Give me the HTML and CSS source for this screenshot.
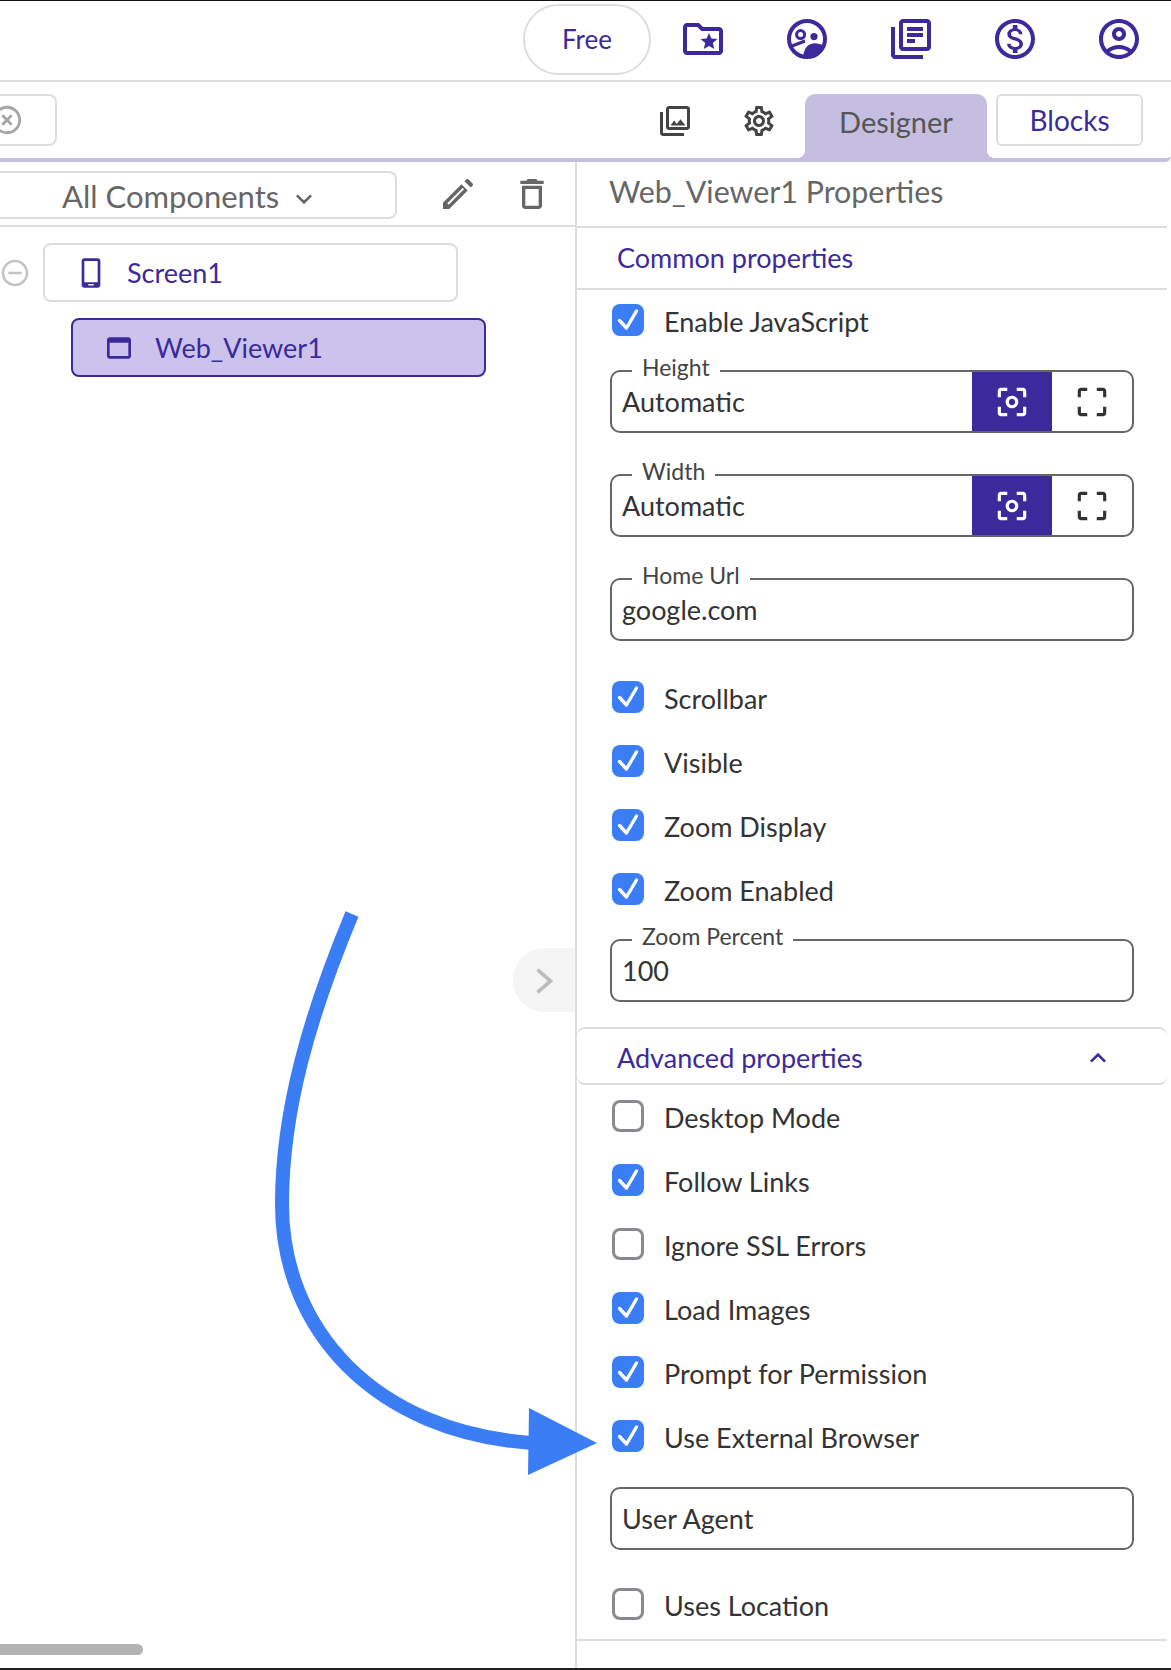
FILE: index.html
```html
<!DOCTYPE html>
<html lang="en">
<head>
  <meta charset="UTF-8">
  <title>Designer</title>
  <link rel="stylesheet" href="styles.css">
</head>
<body>

  <!-- icons used more than once -->
  <svg class="sprite">
    <symbol id="tick" viewBox="0 0 32 32"><path d="M7.5 16.5l7 7.5L24.5 7" fill="none" stroke="#fff" stroke-width="3.4" stroke-linecap="round" stroke-linejoin="round"/></symbol>
    <symbol id="focus" viewBox="0 0 24 24"><path d="M5 15H3v4c0 1.1.9 2 2 2h4v-2H5v-4zM5 5h4V3H5c-1.1 0-2 .9-2 2v4h2V5zm14-2h-4v2h4v4h2V5c0-1.1-.9-2-2-2zm0 16h-4v2h4c1.1 0 2-.9 2-2v-4h-2v4zM12 8c-2.21 0-4 1.79-4 4s1.79 4 4 4 4-1.79 4-4-1.79-4-4-4zm0 6c-1.1 0-2-.9-2-2s.9-2 2-2 2 .9 2 2-.9 2-2 2z"/></symbol>
    <symbol id="free" viewBox="0 0 24 24"><path d="M3 5v4h2V5h4V3H5c-1.1 0-2 .9-2 2zm2 10H3v4c0 1.1.9 2 2 2h4v-2H5v-4zm14 4h-4v2h4c1.1 0 2-.9 2-2v-4h-2v4zm0-16h-4v2h4v4h2V5c0-1.1-.9-2-2-2z"/></symbol>
  </svg>

  <!-- Top bar -->
  <header class="topbar">
    <a class="plan-pill">Free</a>
    <svg class="top-icon" viewBox="0 0 24 24"><path d="M20 6h-8l-2-2H4c-1.11 0-1.99.89-1.99 2L2 18c0 1.11.89 2 2 2h16c1.11 0 2-.89 2-2V8c0-1.11-.89-2-2-2zm0 12H4V6h5.17l2 2H20v10zm-6.92-3.96L12.39 17 15 15.47 17.61 17l-.69-2.96 2.3-1.99-3.03-.26L15 9l-1.19 2.79-3.03.26z"/></svg>
    <svg class="top-icon" viewBox="0 0 24 24">
      <circle cx="12" cy="12" r="9" fill="none" stroke="#3c2a9c" stroke-width="2"/>
      <circle cx="8.8" cy="9.8" r="2" fill="none" stroke="#3c2a9c" stroke-width="1.5"/>
      <circle cx="15.5" cy="10.8" r="1.8"/>
      <path d="M4.5 15.5L11 13" fill="none" stroke="#3c2a9c" stroke-width="1.6"/>
      <path d="M10 21C10.5 17 12 14.5 15 14.2C17 14 19 14.6 20.5 15.5C19 19 15 22 10 21z"/>
    </svg>
    <svg class="top-icon" viewBox="0 0 24 24"><path d="M4 6H2v14c0 1.1.9 2 2 2h14v-2H4V6zm16-4H8c-1.1 0-2 .9-2 2v12c0 1.1.9 2 2 2h12c1.1 0 2-.9 2-2V4c0-1.1-.9-2-2-2zm0 14H8V4h12v12zM10 9h8v2h-8zm0 3h4v2h-4zm0-6h8v2h-8z"/></svg>
    <svg class="top-icon" viewBox="0 0 24 24"><path d="M12 2C6.48 2 2 6.48 2 12s4.48 10 10 10 10-4.48 10-10S17.52 2 12 2zm0 18c-4.41 0-8-3.59-8-8s3.59-8 8-8 8 3.59 8 8-3.59 8-8 8zm.31-8.86c-1.77-.45-2.34-.94-2.34-1.67 0-.84.79-1.43 2.1-1.43 1.38 0 1.9.66 1.94 1.64h1.71c-.05-1.34-.87-2.57-2.49-2.97V5H10.9v1.69c-1.51.32-2.72 1.3-2.72 2.81 0 1.79 1.49 2.69 3.66 3.21 1.95.46 2.34 1.15 2.34 1.87 0 .53-.39 1.39-2.1 1.39-1.6 0-2.23-.72-2.32-1.64H8.04c.1 1.7 1.36 2.66 2.86 2.97V19h2.34v-1.67c1.52-.29 2.72-1.16 2.73-2.77-.01-2.2-1.9-2.96-3.66-3.42z"/></svg>
    <svg class="top-icon" viewBox="0 0 24 24"><path d="M12 2C6.48 2 2 6.48 2 12s4.48 10 10 10 10-4.48 10-10S17.52 2 12 2zM7.35 18.5C8.66 17.56 10.26 17 12 17s3.34.56 4.65 1.5c-1.31.94-2.91 1.5-4.65 1.5s-3.34-.56-4.65-1.5zm10.79-1.38C16.45 15.8 14.32 15 12 15s-4.45.8-6.14 2.12C4.7 15.73 4 13.95 4 12c0-4.42 3.58-8 8-8s8 3.58 8 8c0 1.95-.7 3.73-1.86 5.12z"/><path d="M12 6c-1.93 0-3.5 1.57-3.5 3.5S10.07 13 12 13s3.5-1.57 3.5-3.5S13.93 6 12 6zm0 5c-.83 0-1.5-.67-1.5-1.5S11.17 8 12 8s1.5.67 1.5 1.5S12.83 11 12 11z"/></svg>
  </header>

  <!-- Toolbar with tabs -->
  <div class="toolbar">
    <div class="search-box">
      <svg class="clear-icon" viewBox="0 0 24 24"><path d="M14.59 8L12 10.59 9.41 8 8 9.41 10.59 12 8 14.59 9.41 16 12 13.41 14.59 16 16 14.59 13.41 12 16 9.41 14.59 8zM12 2C6.47 2 2 6.47 2 12s4.47 10 10 10 10-4.47 10-10S17.53 2 12 2zm0 18c-4.41 0-8-3.59-8-8s3.59-8 8-8 8 3.59 8 8-3.59 8-8 8z"/></svg>
    </div>
    <svg class="tool-icon tool-media" viewBox="0 0 24 24"><path d="M20 4v12H8V4h12m0-2H8c-1.1 0-2 .9-2 2v12c0 1.1.9 2 2 2h12c1.1 0 2-.9 2-2V4c0-1.1-.9-2-2-2zm-8.5 9.67l1.69 2.26 2.48-3.1L19 15H9zM2 6v14c0 1.1.9 2 2 2h14v-2H4V6H2z"/></svg>
    <svg class="tool-icon tool-gear" viewBox="0 0 24 24"><path d="M19.43 12.98c.04-.32.07-.64.07-.98 0-.34-.03-.66-.07-.98l2.11-1.65c.19-.15.24-.42.12-.64l-2-3.46c-.09-.16-.26-.25-.44-.25-.06 0-.12.01-.17.03l-2.49 1c-.52-.4-1.08-.73-1.69-.98l-.38-2.65C14.46 2.18 14.25 2 14 2h-4c-.25 0-.46.18-.49.42l-.38 2.65c-.61.25-1.17.59-1.69.98l-2.49-1c-.06-.02-.12-.03-.18-.03-.17 0-.34.09-.43.25l-2 3.46c-.13.22-.07.49.12.64l2.11 1.65c-.04.32-.07.65-.07.98 0 .33.03.66.07.98l-2.11 1.65c-.19.15-.24.42-.12.64l2 3.46c.09.16.26.25.44.25.06 0 .12-.01.17-.03l2.49-1c.52.4 1.08.73 1.69.98l.38 2.65c.03.24.24.42.49.42h4c.25 0 .46-.18.49-.42l.38-2.65c.61-.25 1.17-.59 1.69-.98l2.49 1c.06.02.12.03.18.03.17 0 .34-.09.43-.25l2-3.46c.12-.22.07-.49-.12-.64l-2.11-1.65zm-1.98-1.71c.04.31.05.52.05.73 0 .21-.02.43-.05.73l-.14 1.13.89.7 1.08.84-.7 1.21-1.27-.51-1.04-.42-.9.68c-.43.32-.84.56-1.25.73l-1.06.43-.16 1.13-.2 1.35h-1.4l-.19-1.35-.16-1.13-1.06-.43c-.43-.18-.83-.41-1.23-.71l-.91-.7-1.06.43-1.27.51-.7-1.21 1.08-.84.89-.7-.14-1.13c-.03-.31-.05-.54-.05-.74s.02-.43.05-.73l.14-1.13-.89-.7-1.08-.84.7-1.21 1.27.51 1.04.42.9-.68c.43-.32.84-.56 1.25-.73l1.06-.43.16-1.13.2-1.35h1.39l.19 1.35.16 1.13 1.06.43c.43.18.83.41 1.23.71l.91.7 1.06-.43 1.27-.51.7 1.21-1.07.85-.89.7.14 1.13zM12 8c-2.21 0-4 1.79-4 4s1.79 4 4 4 4-1.79 4-4-1.79-4-4-4zm0 6c-1.1 0-2-.9-2-2s.9-2 2-2 2 .9 2 2-.9 2-2 2z"/></svg>
    <div class="tab tab-active">Designer</div>
    <div class="tab tab-blocks">Blocks</div>
  </div>

  <main class="workspace">

    <!-- Component tree -->
    <section class="tree-panel">
      <div class="tree-head">
        <div class="comp-select">
          <span>All Components</span>
          <svg class="select-caret" viewBox="0 0 24 24"><path d="M7.41 8.59L12 13.17l4.59-4.58L18 10l-6 6-6-6z"/></svg>
        </div>
        <svg class="head-icon head-edit" viewBox="0 0 24 24">
          <path d="M3 21v-3.75L14.06 6.19l3.75 3.75L6.75 21zM20.71 7.04c.39-.39.39-1.02 0-1.41l-2.34-2.34c-.39-.39-1.02-.39-1.41 0l-1.1 1.1 3.75 3.75 1.1-1.1z"/>
          <path d="M6 18l9.2-9.2" fill="none" stroke="#fff" stroke-width="1.2"/>
        </svg>
        <svg class="head-icon head-trash" viewBox="0 0 24 24"><path d="M16 9v10H8V9h8m-1.5-6h-5l-1 1H5v2h14V4h-3.5l-1-1zM18 7H6v12c0 1.1.9 2 2 2h8c1.1 0 2-.9 2-2V7z"/></svg>
      </div>

      <div class="tree-row">
        <svg class="collapse-icon" viewBox="0 0 24 24"><path d="M7 11v2h10v-2H7zm5-9C6.48 2 2 6.48 2 12s4.48 10 10 10 10-4.48 10-10S17.52 2 12 2zm0 18c-4.41 0-8-3.59-8-8s3.59-8 8-8 8 3.59 8 8-3.59 8-8 8z"/></svg>
        <div class="tree-node">
          <svg class="node-icon" viewBox="0 0 24 24"><path d="M17 1.01L7 1c-1.1 0-2 .9-2 2v18c0 1.1.9 2 2 2h10c1.1 0 2-.9 2-2V3c0-1.1-.9-1.99-2-1.99zM17 19H7V3h10v16zM10 20.2h4v1.2h-4z"/></svg>
          <span>Screen1</span>
        </div>
      </div>
      <div class="tree-node tree-node-selected">
        <svg class="node-icon" viewBox="0 0 24 24"><path d="M19 4H5c-1.11 0-2 .9-2 2v12c0 1.1.89 2 2 2h14c1.1 0 2-.9 2-2V6c0-1.1-.89-2-2-2zm0 14H5V8h14v10z"/></svg>
        <span>Web_Viewer1</span>
      </div>

      <div class="panel-toggle">
        <svg viewBox="0 0 24 24"><path d="M6 1.5L18 12 6 22.5" fill="none" stroke="#bdbdbd" stroke-width="3.4"/></svg>
      </div>
      <div class="h-scrollbar"></div>
    </section>

    <!-- Properties -->
    <section class="props-panel">
      <h2 class="props-title">Web_Viewer1 Properties</h2>
      <h3 class="group-head">Common properties</h3>

      <div class="check-row first-row"><span class="check on"><svg><use href="#tick"/></svg></span>Enable JavaScript</div>

      <div class="field field-first">
        <label>Height</label>
        <span class="field-value">Automatic</span>
        <span class="mode-btn mode-on"><svg><use href="#focus"/></svg></span>
        <span class="mode-btn"><svg><use href="#free"/></svg></span>
      </div>
      <div class="field">
        <label>Width</label>
        <span class="field-value">Automatic</span>
        <span class="mode-btn mode-on"><svg><use href="#focus"/></svg></span>
        <span class="mode-btn"><svg><use href="#free"/></svg></span>
      </div>
      <div class="field">
        <label>Home Url</label>
        <span class="field-value">google.com</span>
      </div>

      <div class="check-row after-field"><span class="check on"><svg><use href="#tick"/></svg></span>Scrollbar</div>
      <div class="check-row"><span class="check on"><svg><use href="#tick"/></svg></span>Visible</div>
      <div class="check-row"><span class="check on"><svg><use href="#tick"/></svg></span>Zoom Display</div>
      <div class="check-row"><span class="check on"><svg><use href="#tick"/></svg></span>Zoom Enabled</div>

      <div class="field field-first">
        <label>Zoom Percent</label>
        <span class="field-value">100</span>
      </div>

      <h3 class="group-head group-foldable">
        Advanced properties
        <svg viewBox="0 0 24 24"><path d="M7.41 15.41L12 10.83l4.59 4.58L18 14l-6-6-6 6z"/></svg>
      </h3>

      <div class="check-row"><span class="check"></span>Desktop Mode</div>
      <div class="check-row"><span class="check on"><svg><use href="#tick"/></svg></span>Follow Links</div>
      <div class="check-row"><span class="check"></span>Ignore SSL Errors</div>
      <div class="check-row"><span class="check on"><svg><use href="#tick"/></svg></span>Load Images</div>
      <div class="check-row"><span class="check on"><svg><use href="#tick"/></svg></span>Prompt for Permission</div>
      <div class="check-row"><span class="check on"><svg><use href="#tick"/></svg></span>Use External Browser</div>

      <div class="field field-agent">
        <span class="field-value">User Agent</span>
      </div>

      <div class="check-row after-agent"><span class="check"></span>Uses Location</div>
      <div class="props-end"></div>
    </section>
  </main>

  <!-- Callout arrow drawn over the page -->
  <svg class="callout" viewBox="0 0 1171 1670">
    <path d="M352 914C310 1015 282 1110 282 1204C282 1330 375 1432 532 1443" fill="none" stroke="#3b7df5" stroke-width="14"/>
    <path d="M529 1408L597 1443L528 1475z" fill="#3b7df5"/>
  </svg>

</body>
</html>
```

FILE: styles.css
```css
/* Base layout */
* {
  box-sizing: border-box;
}
body {
  margin: 0;
  width: 1171px;
  height: 1670px;
  overflow: hidden;
  position: relative;
  background: #fff;
  border-top: 1px solid #111;
  border-bottom: 2px solid #222;
  font-family: "Lato", "Liberation Sans", sans-serif;
  color: #333;
}
.sprite {
  position: absolute;
  width: 0;
  height: 0;
}

/* Top bar */
.topbar {
  display: flex;
  align-items: center;
  height: 81px;
  padding-bottom: 3px;
  border-bottom: 2px solid #ddd;
}
.plan-pill {
  margin-left: 523px;
  width: 128px;
  height: 71px;
  line-height: 67px;
  text-align: center;
  border: 2px solid #ddd;
  border-radius: 36px;
  font-size: 26px;
  color: #3c2a9c;
}
.top-icon {
  width: 48px;
  height: 48px;
  margin-left: 56px;
  fill: #3c2a9c;
}
.top-icon:first-of-type {
  margin-left: 28px;
}

/* Toolbar and tabs */
.toolbar {
  display: flex;
  align-items: flex-start;
  height: 80px;
  padding-top: 12px;
  border-bottom: 4px solid #c5bee0;
  border-bottom-right-radius: 6px;
}
.search-box {
  width: 57px;
  height: 52px;
  border: 2px solid #ddd;
  border-left: none;
  border-radius: 0 8px 8px 0;
  display: flex;
  align-items: center;
}
.clear-icon {
  width: 34px;
  height: 34px;
  margin-left: -10px;
  fill: #a6a6a6;
}
.tool-icon {
  width: 36px;
  height: 36px;
  margin-top: 9px;
  fill: #444;
}
.tool-media {
  margin-left: 600px;
}
.tool-gear {
  margin-left: 48px;
  margin-right: 28px;
}
.tab {
  width: 147px;
  height: 52px;
  margin-left: 9px;
  line-height: 50px;
  text-align: center;
  border: 2px solid #ddd;
  border-radius: 6px;
  font-size: 29px;
  color: #3c2a9c;
}
.tab-blocks {
  font-size: 28px;
  line-height: 48px;
}
.tab-active {
  position: relative;
  width: 182px;
  height: 64px;
  margin-left: 0;
  line-height: 56px;
  background: #c5bee0;
  border: none;
  border-radius: 10px 10px 0 0;
  color: #555;
}
.tab-active::before,
.tab-active::after {
  content: "";
  position: absolute;
  bottom: 0;
  width: 8px;
  height: 8px;
}
.tab-active::before {
  left: -8px;
  background: radial-gradient(circle at 0 0, transparent 8px, #c5bee0 8px);
}
.tab-active::after {
  right: -8px;
  background: radial-gradient(circle at 100% 0, transparent 8px, #c5bee0 8px);
}

/* Two columns below the toolbar */
.workspace {
  display: grid;
  grid-template-columns: 577px 594px;
  height: 1506px;
}

/* Component tree */
.tree-panel {
  position: relative;
  border-right: 2px solid #ddd;
}
.tree-head {
  display: flex;
  align-items: flex-start;
  height: 65px;
  border-bottom: 2px solid #ddd;
}
.comp-select {
  display: flex;
  align-items: center;
  width: 397px;
  height: 48px;
  margin-top: 9px;
  padding: 2px 0 0 62px;
  position: relative;
  border: 2px solid #ddd;
  border-left: none;
  border-radius: 0 8px 8px 0;
  font-size: 31px;
  color: #666;
  white-space: nowrap;
}
.select-caret {
  position: absolute;
  right: 75px;
  top: 10px;
  width: 32px;
  height: 32px;
  fill: #666;
}
.head-icon {
  width: 40px;
  height: 40px;
  margin-top: 12px;
  fill: #666;
}
.head-edit {
  margin-left: 41px;
}
.head-trash {
  margin-left: 34px;
}
.tree-row {
  display: flex;
  align-items: center;
  margin-top: 16px;
}
.collapse-icon {
  width: 32px;
  height: 32px;
  margin-left: -1px;
  margin-right: 12px;
  fill: #c4c4c4;
}
.tree-node {
  display: flex;
  align-items: center;
  width: 415px;
  height: 59px;
  padding-left: 30px;
  border: 2px solid #ddd;
  border-radius: 8px;
  font-size: 27px;
  color: #3c2a9c;
}
.node-icon {
  width: 32px;
  height: 32px;
  margin-right: 20px;
  fill: #3c2a9c;
}
.tree-node-selected {
  margin: 16px 0 0 71px;
  background: #cbc3eb;
  border-color: #3c2a9c;
}
.panel-toggle {
  position: absolute;
  top: 786px;
  right: 0;
  width: 62px;
  height: 64px;
  padding: 20px 0 0 18px;
  background: #f5f5f5;
  border-radius: 32px 0 0 32px;
}
.panel-toggle svg {
  display: block;
  width: 26px;
  height: 26px;
}
.h-scrollbar {
  position: absolute;
  left: 0;
  top: 1482px;
  width: 143px;
  height: 11px;
  background: #b3b3b3;
  border-radius: 0 6px 6px 0;
}

/* Properties */
.props-panel {
  padding-right: 4px;
}
.props-title {
  margin: 0;
  height: 66px;
  padding-left: 32px;
  line-height: 58px;
  font-size: 30.4px;
  font-weight: 400;
  color: #666;
  border-bottom: 2px solid #ddd;
}
.group-head {
  margin: 0;
  height: 62px;
  padding-left: 40px;
  line-height: 60px;
  font-size: 27px;
  font-weight: 400;
  color: #3c2a9c;
  border-bottom: 2px solid #ddd;
}
.group-foldable {
  display: flex;
  align-items: center;
  justify-content: space-between;
  height: 58px;
  margin: 25px 0 -1px;
  padding-top: 3px;
  padding-right: 53px;
  border-top: 2px solid #ddd;
  border-radius: 8px;
}
.group-foldable svg {
  width: 32px;
  height: 32px;
  fill: #3c2a9c;
}
.check-row {
  display: flex;
  align-items: center;
  height: 64px;
  padding-top: 3px;
  padding-left: 35px;
  font-size: 27px;
  color: #333;
}
.first-row {
  height: 62px;
  padding-bottom: 2px;
}
.after-field {
  margin-top: 24px;
}
.after-agent {
  margin-top: 22px;
}
.check {
  flex: none;
  width: 32px;
  height: 32px;
  margin-top: -3px;
  margin-right: 20px;
  border: 3px solid #8a8a8e;
  border-radius: 8px;
}
.check.on {
  background: #3b7df5;
  border: none;
}
.check svg {
  display: block;
  width: 32px;
  height: 32px;
}
.field {
  position: relative;
  display: flex;
  align-items: stretch;
  width: 524px;
  height: 63px;
  margin: 41px 0 0 33px;
  border: 2px solid #666;
  border-radius: 10px;
}
.field-first {
  margin-top: 18px;
}
.field-agent {
  margin-top: 19px;
}
.field label {
  position: absolute;
  left: 20px;
  top: -19px;
  padding: 0 10px;
  background: #fff;
  line-height: 28px;
  font-size: 23px;
  color: #444;
}
.field-value {
  flex: 1;
  padding-left: 10px;
  line-height: 60px;
  font-size: 27px;
  color: #333;
}
.mode-btn {
  display: flex;
  align-items: center;
  justify-content: center;
  width: 80px;
  fill: #333;
}
.mode-btn svg {
  width: 38px;
  height: 38px;
}
.mode-on {
  background: #3c2a9c;
  fill: #fff;
}
.props-end {
  margin-top: 3px;
  border-top: 2px solid #ddd;
}

/* Callout */
.callout {
  position: absolute;
  left: 0;
  top: -1px;
  width: 1171px;
  height: 1670px;
  pointer-events: none;
}
```
